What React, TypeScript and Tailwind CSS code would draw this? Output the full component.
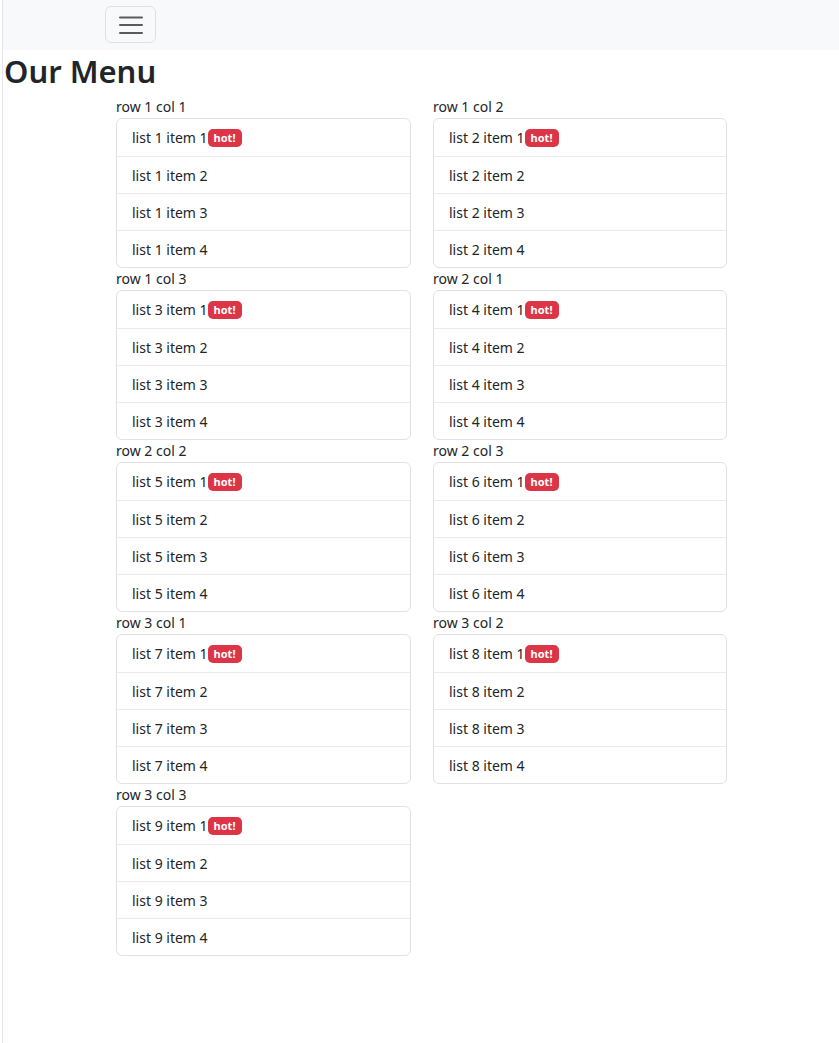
const lists = [
  "row 1 col 1",
  "row 1 col 2",
  "row 1 col 3",
  "row 2 col 1",
  "row 2 col 2",
  "row 2 col 3",
  "row 3 col 1",
  "row 3 col 2",
  "row 3 col 3",
];

function MenuList({ label, n }: { label: string; n: number }) {
  return (
    <div>
      <div className="h-[22px] leading-[22px]">{label}</div>
      <ul className="border border-[#dee2e6] rounded-[6px] bg-white">
        {[1, 2, 3, 4].map((i) => (
          <li
            key={i}
            className={
              "h-[37px] flex items-center pl-[15px] " +
              (i > 1 ? "border-t border-[#e9ecef]" : "")
            }
          >
            <span>
              list {n} item {i}
            </span>
            {i === 1 && (
              <span className="inline-flex items-center h-[18px] px-[6px] rounded-[5px] bg-[#dc3545] text-white text-[11px] font-bold leading-none">
                hot!
              </span>
            )}
          </li>
        ))}
      </ul>
    </div>
  );
}

export default function App() {
  return (
    <div
      className="min-h-screen ml-[2px] border-l border-[#e5e5e5] bg-white text-[#212529] text-[14px]"
      style={{ fontFamily: '"Noto Sans", "Open Sans", sans-serif' }}
    >
      <nav className="h-[50px] bg-[#f8f9fa] flex items-start pt-[6px] pl-[102px]">
        <button className="w-[51px] h-[37px] border border-[rgba(0,0,0,0.1)] rounded-[6px] flex items-center justify-center">
          <svg width="24" height="20" viewBox="0 0 24 20">
            <path
              d="M1 2.5h22M1 10h22M1 18h22"
              stroke="#595c5f"
              strokeWidth="2"
              strokeLinecap="round"
            />
          </svg>
        </button>
      </nav>
      <h1 className="text-[31px] font-semibold leading-[42px] pb-[4px] pl-[1px]">Our Menu</h1>
      <div className="ml-[113px] grid grid-cols-[295px_294px] gap-x-[22px]">
        {lists.map((label, idx) => (
          <MenuList key={label} label={label} n={idx + 1} />
        ))}
      </div>
    </div>
  );
}
